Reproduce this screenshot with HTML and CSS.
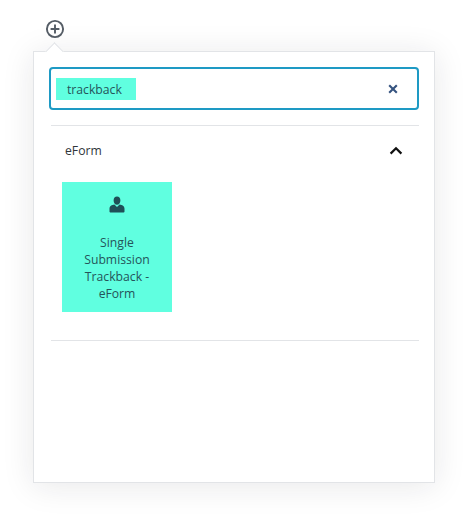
FILE: index.html
```html
<!DOCTYPE html>
<html lang="en">
<head>
<meta charset="utf-8">
<title>Block inserter</title>
<link rel="stylesheet" href="styles.css">
</head>
<body>
<div class="inserter">
  <button class="toggle" aria-label="Add block">
    <svg width="20" height="20" viewBox="0 0 20 20"><circle cx="10" cy="10" r="8.1" fill="none" stroke="#555d66" stroke-width="1.9"/><path d="M10 5.6v8.8M5.6 10h8.8" fill="none" stroke="#555d66" stroke-width="1.9"/></svg>
  </button>
  <div class="panel">
    <span class="arrow"></span>
    <div class="search">
      <span class="query">trackback</span>
      <svg class="clear" width="10" height="10" viewBox="0 0 10 10"><path d="M1.2 1.2l7.600 7.600M8.800 1.200L1.200 8.800" stroke="#35537f" stroke-width="2.100" fill="none"/></svg>
    </div>
    <section class="group">
      <header class="group-head">
        <span class="group-title">eForm</span>
        <svg width="14" height="9" viewBox="0 0 14 9"><path d="M1.600 7.600L7 2.200l5.400 5.400" stroke="#111" stroke-width="2.200" fill="none"/></svg>
      </header>
      <div class="items">
        <div class="tile">
          <svg class="tile-icon" width="16" height="17" viewBox="0 0 16 17"><path d="M8 0.500c2.100 0 3.400 1.700 3.400 3.900S10.100 8.800 8 8.800 4.600 6.600 4.600 4.400 5.900 0.500 8 0.500zM5.400 8.600L8 11l2.600-2.400c2.600.4 4.900 1.400 4.900 4.100v2.700c0 .7-.6 1.100-1.200 1.100H1.700C1.100 16.500.5 16.100.5 15.400v-2.700c0-2.700 2.300-3.700 4.900-4.100z" fill="#1f4f57"/></svg>
          <span class="tile-label">Single Submission Trackback - eForm</span>
        </div>
      </div>
    </section>
  </div>
</div>
</body>
</html>
```

FILE: styles.css
```css
html, body {
  margin: 0;
  padding: 0;
  background: #fff;
}
body {
  font-family: "Open Sans", "Noto Sans", sans-serif;
  font-size: 12.2px;
  color: #23282d;
  width: 469px;
  height: 515px;
  overflow: hidden;
}
.inserter {
  padding: 19px 34px 0 33px;
}
.toggle {
  display: block;
  width: 20px;
  height: 20px;
  margin: 0 0 12px 12px;
  padding: 0;
  border: 0;
  background: none;
}
.toggle svg {
  display: block;
}
.panel {
  position: relative;
  box-sizing: border-box;
  width: 402px;
  height: 432px;
  padding: 15px 15px 0 15px;
  background: #fff;
  border: 1px solid #e2e4e7;
  box-shadow: 0 3px 30px rgba(25, 30, 35, 0.1);
}
.arrow {
  position: absolute;
  left: 14px;
  top: -7px;
  width: 12px;
  height: 12px;
  background: #fff;
  border-top: 1px solid #e2e4e7;
  border-left: 1px solid #e2e4e7;
  transform: rotate(45deg);
}
.search {
  box-sizing: border-box;
  display: flex;
  align-items: center;
  justify-content: space-between;
  width: 370px;
  height: 43px;
  padding: 0 19px 0 5px;
  border: 2px solid #1e9ac4;
  border-radius: 4px;
}
.query {
  box-sizing: border-box;
  width: 80px;
  height: 22px;
  padding-left: 11px;
  background: #60ffe0;
  color: #25545a;
  font-size: 12.2px;
  line-height: 24px;
}
.clear {
  display: block;
}
.group {
  margin: 15px 0 0 2px;
  width: 368px;
  height: 216px;
  box-sizing: border-box;
  border-top: 1px solid #e2e4e7;
  border-bottom: 1px solid #e2e4e7;
}
.group-head {
  display: flex;
  align-items: center;
  justify-content: space-between;
  height: 49px;
  padding: 0 16px 0 14px;
}
.group-title {
  font-size: 12.2px;
  font-weight: 400;
  color: #2f353a;
}
.group-head svg {
  display: block;
}
.items {
  padding: 7px 0 0 11px;
}
.tile {
  box-sizing: border-box;
  display: flex;
  flex-direction: column;
  align-items: center;
  width: 110px;
  height: 130px;
  padding: 14px 8px 0;
  background: #60ffe0;
}
.tile-icon {
  display: block;
}
.tile-label {
  margin-top: 20.6px;
  font-size: 12.2px;
  line-height: 17.3px;
  text-align: center;
  color: #25545a;
}
```
